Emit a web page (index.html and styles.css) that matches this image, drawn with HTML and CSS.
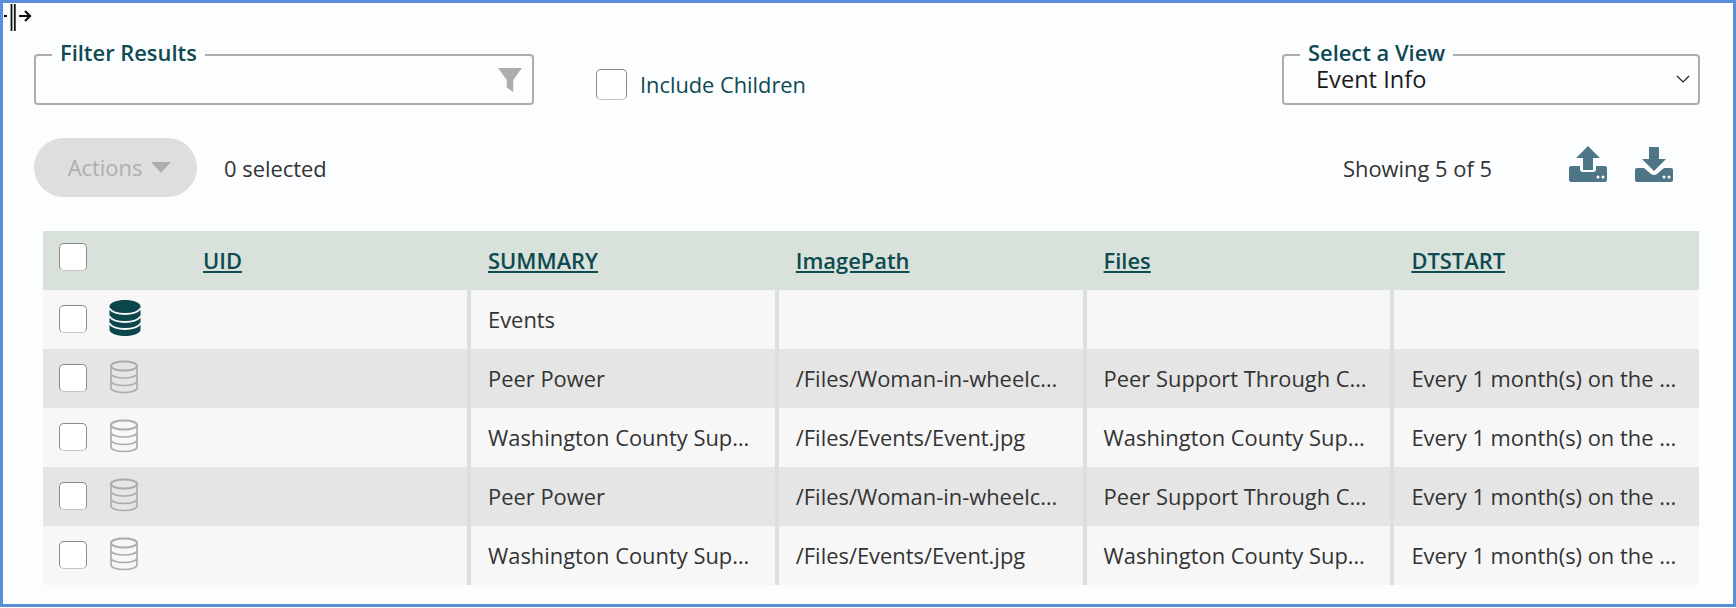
FILE: index.html
```html
<!DOCTYPE html>
<html lang="en">
<head>
<meta charset="utf-8">
<title>Events</title>
<link rel="stylesheet" href="styles.css">
</head>
<body>
<main class="frame">
  <svg class="splitter" width="30" height="28" viewBox="0 0 30 28"><path d="M1 12h3" stroke="#111" stroke-width="2" fill="none"/><path d="M8.500 0v27M11.800 0v27" stroke="#111" stroke-width="1.800" fill="none"/><path d="M16 12h11M22 7l5 5-5 5" stroke="#111" stroke-width="2.200" fill="none"/></svg>
  <section class="filters">
    <fieldset class="field field-filter">
      <legend>Filter Results</legend>
      <svg class="funnel" width="26" height="26" viewBox="0 0 24 24"><path d="M1 1h22l-8 11v11l-6-4v-7z" fill="#adadad"/></svg>
    </fieldset>
    <label class="include"><span class="check"></span>Include Children</label>
    <fieldset class="field field-view">
      <legend>Select a View</legend>
      <span class="view-value">Event Info</span>
      <svg class="chevron" width="14" height="8" viewBox="0 0 14 8"><path d="M1 1l6 6 6-6" stroke="#222" stroke-width="1.200" fill="none"/></svg>
    </fieldset>
  </section>
  <section class="toolbar">
    <button class="actions" type="button">Actions<span class="caret"></span></button>
    <span class="selected">0 selected</span>
    <span class="showing">Showing 5 of 5</span>
    <svg class="tool" width="38" height="36" viewBox="0 0 38 36"><path d="M19 0l12 12h-7v12h-10v-12h-7z" fill="#4f7687"/><path d="M2 20h9v3q0 3 3 3h10q3 0 3-3v-3h9q2 0 2 2v12q0 2-2 2h-34q-2 0-2-2v-12q0-2 2-2z" fill="#4f7687"/><circle cx="29" cy="31" r="1.500" fill="#fff"/><circle cx="34" cy="31" r="1.500" fill="#fff"/></svg>
    <svg class="tool" width="38" height="36" viewBox="0 0 38 36"><path d="M14 1h10v12h7l-12 12-12-12h7z" fill="#4f7687"/><path d="M2 22h7l7 6q3 2 6 0l7-6h7q2 0 2 2v10q0 2-2 2h-34q-2 0-2-2v-10q0-2 2-2z" fill="#4f7687"/><circle cx="29" cy="31" r="1.500" fill="#fff"/><circle cx="34" cy="31" r="1.500" fill="#fff"/></svg>
  </section>
  <table class="grid">
    <colgroup><col class="c-uid"><col class="c-mid"><col class="c-mid"><col class="c-mid"><col></colgroup>
    <thead>
      <tr>
        <th class="uid-head"><span class="check check-head"></span><a href="#" class="uid-link">UID</a></th>
        <th><a href="#">SUMMARY</a></th>
        <th><a href="#">ImagePath</a></th>
        <th><a href="#">Files</a></th>
        <th><a href="#">DTSTART</a></th>
      </tr>
    </thead>
    <tbody>
      <tr>
        <td class="sel"><div class="sel-in"><span class="check"></span><svg class="db" width="32" height="36" viewBox="0 0 32 36"><path d="M.5 6.500C.5 2.500 8 0 16 0s15.500 2.500 15.500 6.500v23C31.500 33.500 24 36 16 36S.5 33.500.5 29.500z" fill="#0b464c"/><path d="M0 8c3 4.500 8 6 16 6s13-1.500 16-6M0 16c3 4.500 8 6 16 6s13-1.500 16-6M0 23c3 4.500 8 6 16 6s13-1.500 16-6" fill="none" stroke="#f7f7f7" stroke-width="1.800"/></svg></div></td>
        <td>Events</td><td></td><td></td><td></td>
      </tr>
      <tr>
        <td class="sel"><div class="sel-in"><span class="check"></span><svg class="db" width="30" height="34" viewBox="0 0 30 34" fill="none" stroke="#ababab" stroke-width="2"><ellipse cx="15" cy="6" rx="13" ry="4.500"/><path d="M2 6v22c0 2.500 6 4.500 13 4.500s13-2 13-4.500V6M2 13.500c0 2.500 6 4.500 13 4.500s13-2 13-4.500M2 21c0 2.500 6 4.500 13 4.500S28 23.500 28 21" stroke-width="1.600"/></svg></div></td>
        <td>Peer Power</td><td>/Files/Woman-in-wheelchair-at-computer.jpg</td><td>Peer Support Through Computers</td><td>Every 1 month(s) on the first Monday</td>
      </tr>
      <tr>
        <td class="sel"><div class="sel-in"><span class="check"></span><svg class="db" width="30" height="34" viewBox="0 0 30 34" fill="none" stroke="#ababab" stroke-width="2"><ellipse cx="15" cy="6" rx="13" ry="4.500"/><path d="M2 6v22c0 2.500 6 4.500 13 4.500s13-2 13-4.500V6M2 13.500c0 2.500 6 4.500 13 4.500s13-2 13-4.500M2 21c0 2.500 6 4.500 13 4.500S28 23.500 28 21" stroke-width="1.600"/></svg></div></td>
        <td>Washington County Support Group</td><td>/Files/Events/Event.jpg</td><td>Washington County Support Group</td><td>Every 1 month(s) on the first Monday</td>
      </tr>
      <tr>
        <td class="sel"><div class="sel-in"><span class="check"></span><svg class="db" width="30" height="34" viewBox="0 0 30 34" fill="none" stroke="#ababab" stroke-width="2"><ellipse cx="15" cy="6" rx="13" ry="4.500"/><path d="M2 6v22c0 2.500 6 4.500 13 4.500s13-2 13-4.500V6M2 13.500c0 2.500 6 4.500 13 4.500s13-2 13-4.500M2 21c0 2.500 6 4.500 13 4.500S28 23.500 28 21" stroke-width="1.600"/></svg></div></td>
        <td>Peer Power</td><td>/Files/Woman-in-wheelchair-at-computer.jpg</td><td>Peer Support Through Computers</td><td>Every 1 month(s) on the first Monday</td>
      </tr>
      <tr>
        <td class="sel"><div class="sel-in"><span class="check"></span><svg class="db" width="30" height="34" viewBox="0 0 30 34" fill="none" stroke="#ababab" stroke-width="2"><ellipse cx="15" cy="6" rx="13" ry="4.500"/><path d="M2 6v22c0 2.500 6 4.500 13 4.500s13-2 13-4.500V6M2 13.500c0 2.500 6 4.500 13 4.500s13-2 13-4.500M2 21c0 2.500 6 4.500 13 4.500S28 23.500 28 21" stroke-width="1.600"/></svg></div></td>
        <td>Washington County Support Group</td><td>/Files/Events/Event.jpg</td><td>Washington County Support Group</td><td>Every 1 month(s) on the first Monday</td>
      </tr>
    </tbody>
  </table>
</main>
</body>
</html>
```
FILE: styles.css
```css
* { box-sizing: border-box; }
html, body { margin: 0; padding: 0; background: #fff; }
body { font-family: "Open Sans", "Liberation Sans", sans-serif; color: #333; overflow: hidden; }
.frame {
  position: relative;
  width: 1736px;
  height: 607px;
  border: 3px solid #5a90da;
  background: #fcfdff;
  padding: 0 33px 0 31px;
}
.splitter { position: absolute; left: 0; top: 1px; }
.filters { display: flex; align-items: flex-start; padding-top: 34px; height: 132px; }
.field {
  position: relative;
  margin: 0;
  height: 68px;
  border: 2px solid #adadad;
  border-radius: 4px;
  padding: 0;
  background: transparent;
}
.field legend {
  margin-left: 16px;
  padding: 0 8px 4px;
  font-size: 21.900px;
  line-height: 32px;
  font-weight: 600;
  color: #0e4a51;
}
.field-filter { width: 500px; }
.funnel { position: absolute; right: 9px; top: -6px; }
.include {
  display: flex;
  align-items: center;
  margin: 32px 0 0 62px;
  font-size: 21.800px;
  line-height: 30px;
  color: #0e4a51;
}
.check {
  display: block;
  flex: none;
  width: 28px;
  height: 28px;
  background: #fff;
  border: 1px solid #8a8a8a;
  border-bottom-color: #c4c4c4;
  border-radius: 5px;
}
.include .check { width: 31px; height: 31px; margin-right: 13px; }
.field-view { width: 418px; margin-left: auto; }
.field-view legend { margin-left: 16px; }
.view-value { position: absolute; left: 32px; top: -9px; font-size: 23.600px; line-height: 30px; color: #1a1a1a; }
.chevron { position: absolute; right: 8px; top: 2px; }
.toolbar { display: flex; align-items: center; height: 59px; margin-top: 3px; }
.actions {
  display: flex;
  align-items: center;
  justify-content: center;
  width: 163px;
  height: 59px;
  padding: 0 0 1px 8px;
  border: 0;
  border-radius: 30px;
  background: #dedede;
  color: #aeaeae;
  font: 400 21.900px "Open Sans", sans-serif;
}
.caret {
  margin-left: 9px;
  border: 10px solid transparent;
  border-top: 11px solid #aeaeae;
  border-bottom: 0;
}
.selected { margin-left: 27px; font-size: 21.900px; padding-top: 1px; }
.showing { margin-left: auto; margin-right: 77px; font-size: 21.900px; padding-top: 1px; }
.tool { margin-right: 28px; margin-top: -8px; }
.tool:last-child { margin-right: 27px; }
.grid {
  width: 1656px;
  margin: 34px 0 0 9px;
  border-collapse: collapse;
  table-layout: fixed;
  font-size: 21.900px;
  color: #333;
}
.c-uid { width: 426px; }
.c-mid { width: 307.800px; }
thead tr { background: #d9e2da; height: 59px; }
th { padding: 0 0 1px 17px; text-align: left; font-weight: 600; }
th:not(:first-child) { padding-left: 19px; }
th a { color: #0e4a51; }
.uid-head { position: relative; padding-left: 160px; }
.check-head { position: absolute; left: 16px; top: 12px; }
tbody tr { height: 59px; background: #f7f7f7; }
tbody tr:nth-child(even) { background: #e5e5e5; }
td {
  padding: 0 17px 1px;
  border-left: 4px solid #d9e2da;
  white-space: nowrap;
  overflow: hidden;
  text-overflow: ellipsis;
}
td.sel { border-left: 0; padding: 0 0 0 16px; }
.sel-in { display: flex; align-items: center; gap: 22px; }
.sel-in .check { margin-top: -2px; }
.db { margin-top: -3px; }
```
